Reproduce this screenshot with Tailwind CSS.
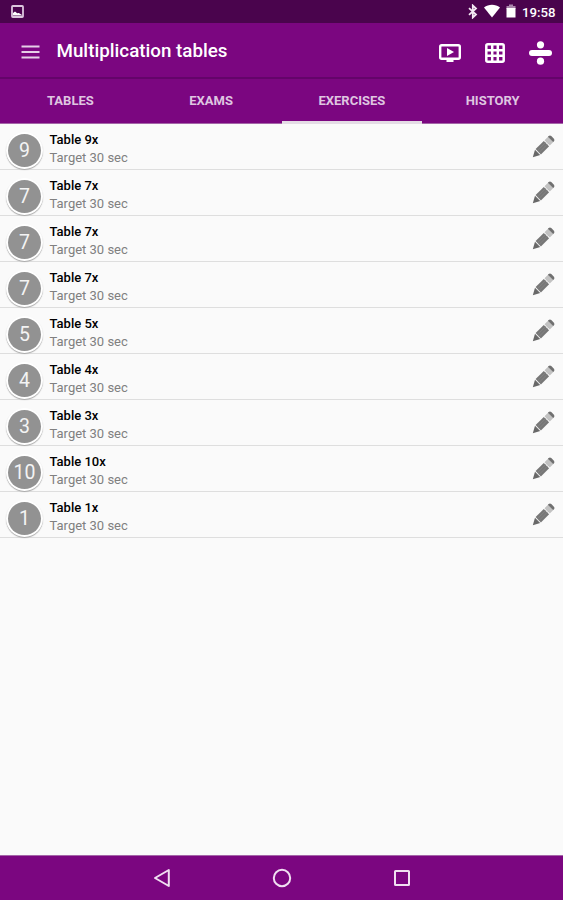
<!DOCTYPE html>
<html lang="en">
<head>
    <meta charset="UTF-8" />
    <meta name="viewport" content="width=device-width, initial-scale=1.0" />
    <title>Multiplication tables</title>
    <script src="https://cdn.jsdelivr.net/npm/@tailwindcss/browser@4"></script>
</head>
<body class="h-[900px] flex flex-col overflow-hidden bg-[#fafafa] font-[Roboto,sans-serif]">

    <!-- Status bar -->
    <div class="h-[23px] shrink-0 flex items-center bg-[#4a044d] text-white pl-[11px] pr-[7px]">
        <svg class="w-[13px] h-[13px]" viewBox="0 0 13 13">
            <rect x="1" y="1" width="11" height="11" rx="0.8" fill="none" stroke="#dcc6dd" stroke-width="1.8" />
            <path d="M2 10.500V8l2-1.500 2.200 1.800 1.600-.3L11 10v.5z" fill="#fff" />
        </svg>
        <div class="ml-auto flex items-center">
            <svg class="w-[10px] h-[15px] mr-[6px]" viewBox="0 0 10 15" fill="none" stroke="#f3e8f3" stroke-width="1.800">
                <path d="M1 4.200l7 6.300-3.200 3V1.500l3.200 3-7 6.300" />
            </svg>
            <svg class="w-[16px] h-[14px] mr-[6px]" viewBox="0 0 16 14" fill="#fff">
                <path d="M0 3.600C4.500 -.2 11.500 -.2 16 3.600L8 13.600z" />
            </svg>
            <svg class="w-[10px] h-[14px] mr-[6px]" viewBox="0 0 10 14">
                <path d="M3 .5h4v1.500h2.500v3h-9V2H3z" fill="#a985ab" />
                <path d="M.5 4h9v9.500h-9z" fill="#fff" />
            </svg>
            <span class="w-[34px] text-[13.200px] leading-none font-medium whitespace-nowrap pt-[2px]">19:58</span>
        </div>
    </div>

    <!-- App bar -->
    <header class="h-[56px] shrink-0 flex items-center bg-[#7b0680] border-b-2 border-[#64046a] pl-[21px] pr-[11px] text-white">
        <svg class="w-[19px] h-[14px] mt-[4px]" viewBox="0 0 19 14" stroke="#e6cfe7" stroke-width="1.800">
            <path d="M.5 1.500h18M.5 7h18M.5 12.500h18" />
        </svg>
        <h1 class="ml-[16.500px] pt-[2px] text-[18.800px] leading-none font-medium whitespace-nowrap">Multiplication tables</h1>
        <div class="ml-auto flex items-center pt-[5px]">
            <svg class="w-[22px] h-[20px] mr-[24px]" viewBox="0 0 22 20">
                <rect x="1.200" y="2.200" width="19.600" height="13.600" rx="1.500" fill="none" stroke="#fff" stroke-width="2.400" />
                <path d="M7.500 16h7v3h-7zM8 5l7 4-7 4z" fill="#fff" />
            </svg>
            <svg class="w-[20px] h-[20px] mr-[24px]" viewBox="0 0 20 20" fill="none" stroke="#fff" stroke-width="2.500">
                <rect x="1.300" y="1.300" width="17.400" height="17.400" rx="1.500" />
                <path d="M7.200 1v18M12.800 1v18M1 7.200h18M1 12.800h18" />
            </svg>
            <svg class="w-[23px] h-[24px]" viewBox="0 0 23 24" fill="#fff">
                <circle cx="11.500" cy="3.800" r="3.600" />
                <rect x="0" y="9" width="23" height="6" rx="3" />
                <circle cx="11.500" cy="20.200" r="3.600" />
            </svg>
        </div>
    </header>

    <!-- Tabs -->
    <nav class="h-[45px] shrink-0 grid grid-cols-4 grid-rows-[100%] bg-[#7b0680] shadow-[inset_0_-1px_0_#a465a8] text-[13px] font-bold text-[#dfc5e0] text-center leading-[44px]">
        <a>TABLES</a>
        <a>EXAMS</a>
        <a class="border-b-3 border-[#e4dce5]">EXERCISES</a>
        <a>HISTORY</a>
    </nav>

    <!-- Exercise list -->
    <ul id="exerciseList" class="flex-1"></ul>

    <!-- Navigation bar -->
    <div class="h-[45px] shrink-0 flex items-center bg-[#7b0680] border-t border-[#a465a8] pl-[153px] gap-[101px]">
        <svg class="w-[18px] h-[20px]" viewBox="0 0 18 20" fill="none" stroke="#f0dff1" stroke-width="2" stroke-linejoin="round">
            <path d="M15.800 2v16L2 10z" />
        </svg>
        <svg class="w-[20px] h-[20px]" viewBox="0 0 20 20" fill="none" stroke="#f0dff1" stroke-width="2">
            <circle cx="10" cy="10" r="8.200" />
        </svg>
        <svg class="w-[18px] h-[18px]" viewBox="0 0 18 18" fill="none" stroke="#f0dff1" stroke-width="2">
            <rect x="2" y="2" width="14" height="14" rx="0.500" />
        </svg>
    </div>

    <script>
        const exercises = [9, 7, 7, 7, 5, 4, 3, 10, 1];

        document.getElementById('exerciseList').innerHTML = exercises.map((n) => `
            <li class="h-[46px] flex items-center border-b border-[#dedede] pl-[6px] pr-[8px]">
                <div class="w-[37px] h-[37px] mt-[7px] rounded-full bg-white shadow-[0_1px_1px_#a8a8a8] flex justify-center items-start pt-[2px]">
                    <div class="w-[33px] h-[33px] rounded-full bg-[#929292] text-[#f4f4f4] text-[19.500px] leading-[34px] text-center">${n}</div>
                </div>
                <div class="ml-[6.500px] pt-[5px] whitespace-nowrap">
                    <p class="text-[13px] leading-[18px] font-medium text-black">Table ${n}x</p>
                    <p class="text-[13px] leading-[18px] text-[#808080]">Target 30 sec</p>
                </div>
                <svg class="ml-auto w-[23px] h-[23px]" viewBox="0 0 23 23">
                    <path d="M.8 22.200L3 14.800 8.200 20z" fill="#686868" />
                    <path d="M3.600 14.100L11.800 5.900 17.100 11.200 8.900 19.400z" fill="#777" />
                    <path d="M12.500 5.200L16.300 1.400 21.600 6.700 17.800 10.500z" fill="#c2c2c2" />
                    <path d="M15.900 1.800l.8-.8q1.300-1 2.600.1l2.600 2.600q1.100 1.300.1 2.600l-.8.800z" fill="#707070" />
                    <path d="M5.300 15.900l9-9M7 17.600l9-9" stroke="#8c8c8c" stroke-width=".6" />
                </svg>
            </li>`).join('');
    </script>
</body>
</html>
